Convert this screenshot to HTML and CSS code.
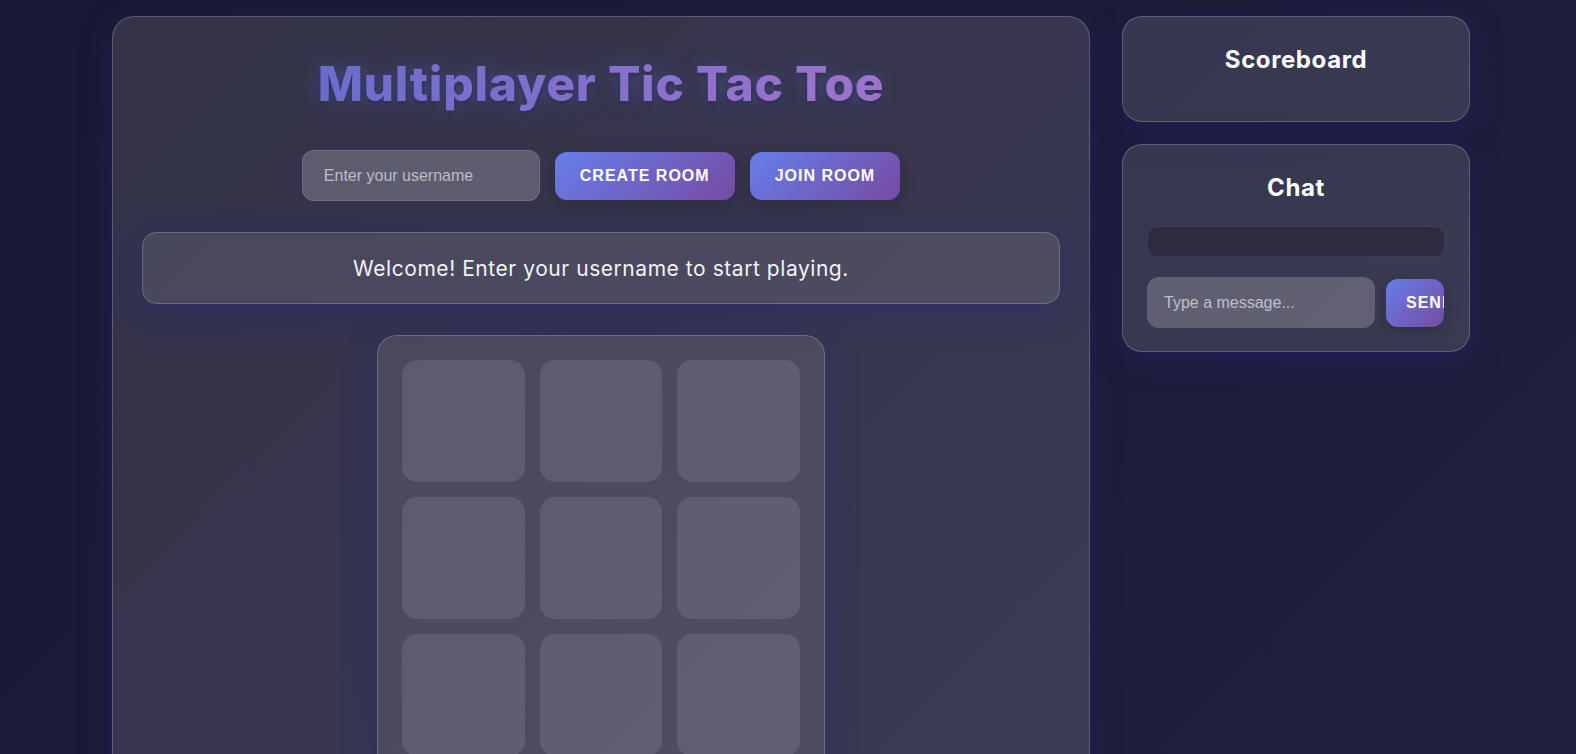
FILE: index.html
```html
<!DOCTYPE html>
<html lang="en">
<head>
<meta charset="utf-8">
<title>Multiplayer Tic Tac Toe</title>
<link rel="stylesheet" href="styles.css">
</head>
<body>
<div class="app">
  <main class="game-panel">
    <h1 class="title">Multiplayer Tic Tac Toe</h1>
    <div class="controls">
      <input class="text-input username" type="text" placeholder="Enter your username">
      <button class="btn">Create Room</button>
      <button class="btn">Join Room</button>
    </div>
    <div class="status">Welcome! Enter your username to start playing.</div>
    <div class="board">
      <div class="cell"></div><div class="cell"></div><div class="cell"></div>
      <div class="cell"></div><div class="cell"></div><div class="cell"></div>
      <div class="cell"></div><div class="cell"></div><div class="cell"></div>
    </div>
  </main>
  <aside class="sidebar">
    <section class="card">
      <h2 class="card-title">Scoreboard</h2>
    </section>
    <section class="card">
      <h2 class="card-title">Chat</h2>
      <div class="messages"></div>
      <div class="chat-row">
        <input class="text-input chat-input" type="text" placeholder="Type a message...">
        <button class="btn send">Send</button>
      </div>
    </section>
  </aside>
</div>
</body>
</html>
```
FILE: styles.css
```css
* { box-sizing: border-box; }
html, body { margin: 0; padding: 0; height: 100%; }
body {
  background: linear-gradient(135deg, #1a1933 0%, #1c1b36 40%, #21213f 100%);
  font-family: "Inter", "Liberation Sans", sans-serif;
  color: #fff;
  overflow: hidden;
}
.app {
  display: flex;
  align-items: flex-start;
  gap: 32px;
  width: 1358px;
  margin-left: calc(50% - 676px);
  padding-top: 16px;
}
.game-panel {
  width: 978px;
  flex: none;
  min-height: 800px;
  padding: 29px;
  border: 1px solid rgba(255,255,255,0.2);
  border-radius: 22px;
  background: linear-gradient(135deg, rgba(255,255,255,0.115), rgba(255,255,255,0.125));
  box-shadow: 0 8px 32px rgba(31,38,135,0.37);
  display: flex;
  flex-direction: column;
  align-items: center;
}
.title {
  margin: 2px 0 0;
  height: 70px;
  font-size: 48px;
  line-height: 72px;
  font-weight: 800;
  letter-spacing: 0.7px;
  background: linear-gradient(90deg, #6a6dcc, #9f73cc);
  -webkit-background-clip: text;
  background-clip: text;
  color: transparent;
  filter: drop-shadow(0 2px 3px rgba(20,18,50,0.45)) drop-shadow(0 0 8px rgba(102,126,234,0.35));
}
.controls {
  display: flex;
  align-items: center;
  gap: 15px;
  margin-top: 32px;
}
.text-input {
  font-family: "Liberation Sans", Arial, sans-serif;
  font-size: 16px;
  color: #fff;
  background: rgba(255,255,255,0.2);
  border: 1px solid rgba(255,255,255,0.12);
  border-radius: 12px;
  outline: none;
}
.text-input::placeholder { color: rgba(255,255,255,0.6); }
.username {
  width: 238px;
  height: 51px;
  padding: 0 21px;
}
.btn {
  font-family: "Liberation Sans", Arial, sans-serif;
  font-weight: 700;
  font-size: 16px;
  letter-spacing: 1px;
  text-transform: uppercase;
  color: #fff;
  height: 48px;
  padding: 0 25px;
  border: none;
  border-radius: 12px;
  background: linear-gradient(135deg, #667eea 0%, #764ba2 100%);
  box-shadow: 0 4px 15px rgba(0,0,0,0.2);
  white-space: nowrap;
  cursor: pointer;
}
.status {
  align-self: stretch;
  margin-top: 31px;
  height: 72px;
  display: flex;
  align-items: center;
  justify-content: center;
  border: 1px solid rgba(255,255,255,0.2);
  border-radius: 15px;
  background: rgba(255,255,255,0.1);
  box-shadow: 0 8px 32px rgba(31,38,135,0.37);
  font-size: 21px;
  letter-spacing: 0.55px;
  color: #f2f2f6;
}
.board {
  margin-top: 31px;
  width: 448px;
  padding: 24px;
  border: 1px solid rgba(255,255,255,0.2);
  border-radius: 20px;
  background: rgba(255,255,255,0.1);
  box-shadow: 0 8px 32px rgba(31,38,135,0.37);
  display: grid;
  grid-template-columns: repeat(3, 1fr);
  grid-auto-rows: 122px;
  gap: 15px;
}
.cell {
  border-radius: 15px;
  background: rgba(255,255,255,0.1);
}
.sidebar {
  width: 348px;
  flex: none;
  display: flex;
  flex-direction: column;
  gap: 22px;
}
.card {
  padding: 25px 24px 23px;
  border: 1px solid rgba(255,255,255,0.2);
  border-radius: 20px;
  background: rgba(255,255,255,0.12);
  box-shadow: 0 8px 32px rgba(31,38,135,0.37);
}
.card-title {
  margin: 0 0 20px;
  text-align: center;
  font-size: 24px;
  line-height: 36px;
  font-weight: 700;
  letter-spacing: 0.6px;
  color: #fff;
}
.messages {
  height: 31px;
  border: 1px solid rgba(255,255,255,0.08);
  border-radius: 10px;
  background: rgba(0,0,0,0.2);
  margin-bottom: 20px;
}
.chat-row {
  display: flex;
  align-items: center;
  gap: 11px;
}
.chat-input {
  width: 228px;
  flex: none;
  height: 51px;
  padding: 0 16px;
  border-color: transparent;
}
.btn.send {
  width: 58px;
  flex: none;
  padding: 0 20px;
  overflow: hidden;
  text-align: left;
}
```
